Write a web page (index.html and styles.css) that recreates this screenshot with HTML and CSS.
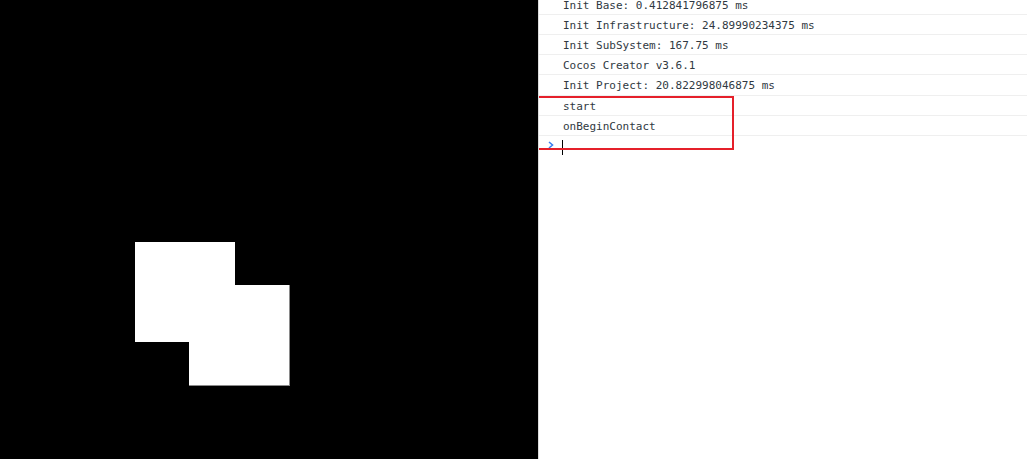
FILE: index.html
```html
<!DOCTYPE html>
<html lang="en">
<head>
    <meta charset="UTF-8">
    <meta name="viewport" content="width=device-width, initial-scale=1.0">
    <title>preview</title>
    <link rel="stylesheet" href="styles.css">
</head>
<body>
    <div class="game">
        <div class="box box1"></div>
        <div class="box box2"></div>
    </div>
    <div class="console">
        <div class="messages">
            <div class="msg">Init Base: 0.412841796875 ms</div>
            <div class="msg">Init Infrastructure: 24.89990234375 ms</div>
            <div class="msg">Init SubSystem: 167.75 ms</div>
            <div class="msg">Cocos Creator v3.6.1</div>
            <div class="msg">Init Project: 20.822998046875 ms</div>
            <div class="msg">start</div>
            <div class="msg">onBeginContact</div>
        </div>
        <div class="prompt">
            <svg class="chevron" width="6" height="8" viewBox="0 0 6 8"><polyline points="1,1 4.5,4 1,7" fill="none" stroke="#3a7ff0" stroke-width="1.6"/></svg>
            <span class="caret"></span>
        </div>
        <div class="highlight"></div>
    </div>
</body>
</html>
```

FILE: styles.css
```css
body {
    margin: 0;
    display: flex;
    height: 459px;
    overflow: hidden;
    background: #fff;
}

.game {
    width: 538px;
    height: 459px;
    background: #000;
    position: relative;
    flex-shrink: 0;
}

.box {
    position: absolute;
    background: #fff;
    box-sizing: border-box;
}

.box1 {
    left: 135px;
    top: 242px;
    width: 100px;
    height: 100px;
}

.box2 {
    left: 189px;
    top: 285px;
    width: 101px;
    height: 101px;
    border-right: 1px solid #8a8a8a;
    border-bottom: 1px solid #8a8a8a;
}

.console {
    flex: 1;
    border-left: 1px solid #dcdcdc;
    position: relative;
    overflow: hidden;
    font-family: "DejaVu Sans Mono", "Liberation Mono", monospace;
    font-size: 11px;
    color: #303942;
}

.messages {
    margin-top: -5.2px;
}

.msg {
    height: 20.17px;
    box-sizing: border-box;
    border-bottom: 1px solid #efefef;
    padding: 2px 0 0 24px;
    line-height: 17px;
    white-space: nowrap;
}

.prompt {
    height: 20px;
    display: flex;
    align-items: center;
    position: relative;
}

.chevron {
    margin-left: 9px;
    margin-top: -1px;
}

.caret {
    display: block;
    width: 1px;
    height: 15px;
    background: #000;
    margin-left: 8px;
    margin-top: 3px;
}

.highlight {
    position: absolute;
    left: -2px;
    top: 96px;
    width: 197px;
    height: 54px;
    box-sizing: border-box;
    border: 2px solid #e5202a;
}
```
